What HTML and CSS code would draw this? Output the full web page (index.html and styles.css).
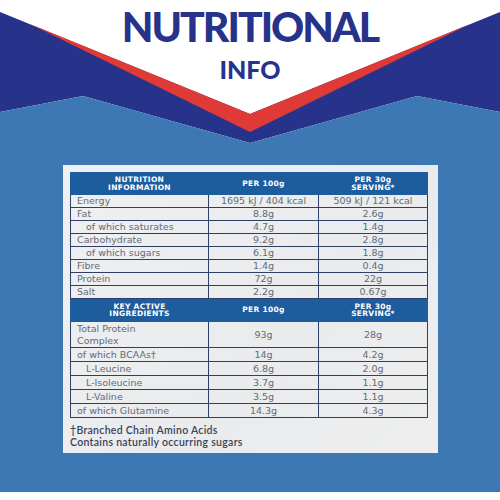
FILE: index.html
```html
<!DOCTYPE html>
<html>
<head>
<meta charset="utf-8">
<link rel="stylesheet" href="styles.css">
</head>
<body>
<div class="page">
  <div class="hero">
    <svg class="hero-bg" viewBox="0 0 500 165" width="500" height="165">
      <rect x="0" y="0" width="500" height="165" fill="#ffffff"/>
      <polygon points="0,12 250,114 500,12 500,112 417,96 250,143 83,96 0,112" fill="#27338a"/>
      <polygon points="0,112 83,96 250,143 417,96 500,112 500,165 0,165" fill="#3d78b4"/>
      <polygon points="30,24 250,114 470,24 250,132" fill="#e03a36"/>
    </svg>
    <h1 class="title">NUTRITIONAL</h1>
    <div class="subtitle">INFO</div>
  </div>
  <div class="card">
    <table class="nut">
      <colgroup><col class="c1"><col class="c2"><col class="c3"></colgroup>
      <tr class="head"><th>NUTRITION<br>INFORMATION</th><th>PER 100g</th><th>PER 30g<br>SERVING*</th></tr>
      <tr><td>Energy</td><td>1695 kJ / 404 kcal</td><td>509 kJ / 121 kcal</td></tr>
      <tr><td>Fat</td><td>8.8g</td><td>2.6g</td></tr>
      <tr><td class="ind">of which saturates</td><td>4.7g</td><td>1.4g</td></tr>
      <tr><td>Carbohydrate</td><td>9.2g</td><td>2.8g</td></tr>
      <tr><td class="ind">of which sugars</td><td>6.1g</td><td>1.8g</td></tr>
      <tr><td>Fibre</td><td>1.4g</td><td>0.4g</td></tr>
      <tr><td>Protein</td><td>72g</td><td>22g</td></tr>
      <tr><td>Salt</td><td>2.2g</td><td>0.67g</td></tr>
      <tr class="head head2"><th>KEY ACTIVE<br>INGREDIENTS</th><th>PER 100g</th><th>PER 30g<br>SERVING*</th></tr>
      <tr class="tall"><td>Total Protein<br>Complex</td><td>93g</td><td>28g</td></tr>
      <tr class="r2"><td>of which BCAAs†</td><td>14g</td><td>4.2g</td></tr>
      <tr class="r2"><td class="ind">L-Leucine</td><td>6.8g</td><td>2.0g</td></tr>
      <tr class="r2"><td class="ind">L-Isoleucine</td><td>3.7g</td><td>1.1g</td></tr>
      <tr class="r2"><td class="ind">L-Valine</td><td>3.5g</td><td>1.1g</td></tr>
      <tr class="r2"><td>of which Glutamine</td><td>14.3g</td><td>4.3g</td></tr>
    </table>
    <p class="note">†Branched Chain Amino Acids<br>Contains naturally occurring sugars</p>
  </div>
</div>
</body>
</html>
```
FILE: styles.css
```css
html, body {
  margin: 0;
  padding: 0;
  background: #ffffff;
}
.page {
  width: 500px;
  height: 492px;
  background: #3d78b4;
  overflow: hidden;
}
.hero {
  position: relative;
  height: 165px;
  display: flex;
  flex-direction: column;
  align-items: center;
}
.hero-bg {
  position: absolute;
  left: 0;
  top: 0;
  display: block;
}
.title {
  position: relative;
  margin: 5px 0 0;
  font-family: "Lato", sans-serif;
  font-weight: 900;
  font-size: 41px;
  line-height: 44px;
  letter-spacing: -2px;
  color: #27338a;
}
.subtitle {
  position: relative;
  margin-top: 7px;
  font-family: "Lato", sans-serif;
  font-weight: 900;
  font-size: 25px;
  line-height: 26px;
  color: #27338a;
}
.card {
  width: 375px;
  height: 288px;
  margin-left: 63px;
  box-sizing: border-box;
  padding: 7px 11px 0 7px;
  background: linear-gradient(135deg, #eef0f2 0%, #e9ebed 60%, #eeeeee 100%);
}
.nut {
  width: 357px;
  border-collapse: collapse;
  table-layout: fixed;
  font-family: "DejaVu Sans", sans-serif;
  font-size: 9.5px;
  color: #646b75;
}
.c1 { width: 138px; }
.c2 { width: 110px; }
.c3 { width: 109px; }
.nut td {
  border: 1px solid #2f3f66;
  height: 12px;
  padding: 0;
  line-height: 12px;
  text-align: center;
  white-space: nowrap;
}
.nut td:first-child {
  text-align: left;
  padding-left: 6px;
}
.nut td.ind {
  padding-left: 15px;
}
.head th {
  background: #1d5c9d;
  color: #ffffff;
  font-weight: bold;
  font-size: 7.5px;
  line-height: 7.5px;
  height: 21px;
  padding: 0;
  border: 1px solid #1d5c9d;
  letter-spacing: 0.3px;
}
.head2 th {
  height: 22px;
}
.tall td {
  height: 25px;
  line-height: 11.5px;
}
.r2 td {
  height: 13px;
  line-height: 13px;
}
.note {
  margin: 6px 0 0;
  font-family: "Lato", sans-serif;
  font-weight: 600;
  font-size: 10.5px;
  line-height: 12px;
  color: #3a4258;
  letter-spacing: 0.3px;
}
```
